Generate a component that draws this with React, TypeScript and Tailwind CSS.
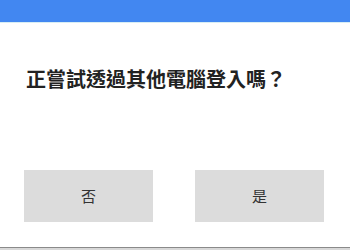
export default function App() {
  return (
    <div
      className="w-[350px] h-[250px] bg-white flex flex-col overflow-hidden"
      style={{ fontFamily: '"Noto Sans CJK TC", "Noto Sans", sans-serif' }}
    >
      <div className="h-[22px] bg-[#4287f1] shrink-0" />
      <div className="h-px bg-[#d8eef4] shrink-0" />
      <div className="mt-[43px] pl-[26px] text-[20px] leading-[26px] font-bold text-[#222]">
        正嘗試透過其他電腦登入嗎？
      </div>
      <div className="mt-[78px] flex pl-[24px] gap-[42px]">
        <div className="w-[129px] h-[52px] bg-[#dcdcdc] flex items-center justify-center text-[15px] text-[#333]">
          否
        </div>
        <div className="w-[129px] h-[52px] bg-[#dcdcdc] flex items-center justify-center text-[15px] text-[#333]">
          是
        </div>
      </div>
      <div className="mt-[25px] h-px bg-[#8a8a8a] shrink-0" />
      <div className="flex-1 bg-[#d8d8d8]" />
    </div>
  );
}
